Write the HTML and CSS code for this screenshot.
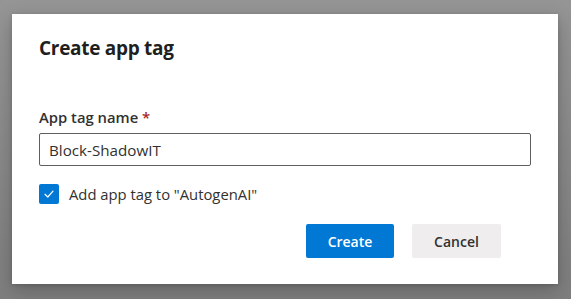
FILE: index.html
```html
<!DOCTYPE html>
<html lang="en">
<head>
    <meta charset="UTF-8">
    <meta name="viewport" content="width=device-width, initial-scale=1.0">
    <title>Create app tag</title>
    <link rel="stylesheet" href="styles.css">
</head>
<body>
    <div class="overlay">
        <div class="dialog">
            <h1 class="dialog-title">Create app tag</h1>

            <div class="field">
                <label class="field-label" for="tagName">App tag name <span class="required">*</span></label>
                <input class="text-input" id="tagName" type="text" value="Block-ShadowIT">
            </div>

            <label class="check-row">
                <span class="checkbox">
                    <svg width="12" height="12" viewBox="0 0 12 12">
                        <path d="M2 6.3 L4.8 9 L10 3.2" fill="none" stroke="#fff" stroke-width="1.2" stroke-linecap="round" stroke-linejoin="round"/>
                    </svg>
                </span>
                <span class="check-text">Add app tag to "AutogenAI"</span>
            </label>

            <div class="dialog-footer">
                <button class="btn btn-primary">Create</button>
                <button class="btn btn-default">Cancel</button>
            </div>
        </div>
    </div>
</body>
</html>
```

FILE: styles.css
```css
* {
    margin: 0;
    padding: 0;
    box-sizing: border-box;
    font-family: "Open Sans", "Noto Sans", Arial, sans-serif;
}

body {
    width: 571px;
    height: 299px;
    overflow: hidden;
    background-color: #8c8c8c;
}

/* Overlay */
.overlay {
    height: 299px;
    padding: 14px 13px 15px 12px;
    background: linear-gradient(#959595, #7e7e7e);
}

.dialog {
    width: 546px;
    height: 270px;
    background-color: #fff;
    padding: 20px 27px 0 27px;
    box-shadow: 0 6px 18px rgba(0,0,0,0.22), 0 1px 4px rgba(0,0,0,0.15);
}

.dialog-title {
    font-size: 19px;
    line-height: 28px;
    font-weight: 700;
    color: #201f1e;
    letter-spacing: -0.3px;
}

/* Field */
.field {
    margin-top: 45px;
}

.field-label {
    display: block;
    font-size: 14.8px;
    line-height: 20px;
    font-weight: 600;
    color: #323130;
    margin-bottom: 6px;
}

.required {
    color: #a4262c;
}

.text-input {
    display: block;
    width: 100%;
    height: 33px;
    border: 1px solid #605e5c;
    border-radius: 2px;
    padding: 0 9px;
    font-size: 15.2px;
    color: #323130;
    outline: none;
}

/* Checkbox */
.check-row {
    display: flex;
    align-items: center;
    gap: 10px;
    margin-top: 18px;
    height: 20px;
}

.checkbox {
    width: 20px;
    height: 20px;
    border-radius: 2px;
    background-color: #0078d4;
    display: flex;
    align-items: center;
    justify-content: center;
}

.check-text {
    font-size: 14.8px;
    line-height: 20px;
    color: #323130;
}

/* Footer */
.dialog-footer {
    display: flex;
    justify-content: flex-end;
    gap: 18px;
    margin-top: 20px;
    padding-right: 30px;
}

.btn {
    height: 34px;
    border: none;
    border-radius: 2px;
    font-size: 14px;
    font-weight: 600;
    cursor: pointer;
}

.btn-primary {
    width: 88px;
    background-color: #0078d4;
    color: #fff;
}

.btn-default {
    width: 89px;
    background-color: #f0edee;
    color: #323130;
}
```
